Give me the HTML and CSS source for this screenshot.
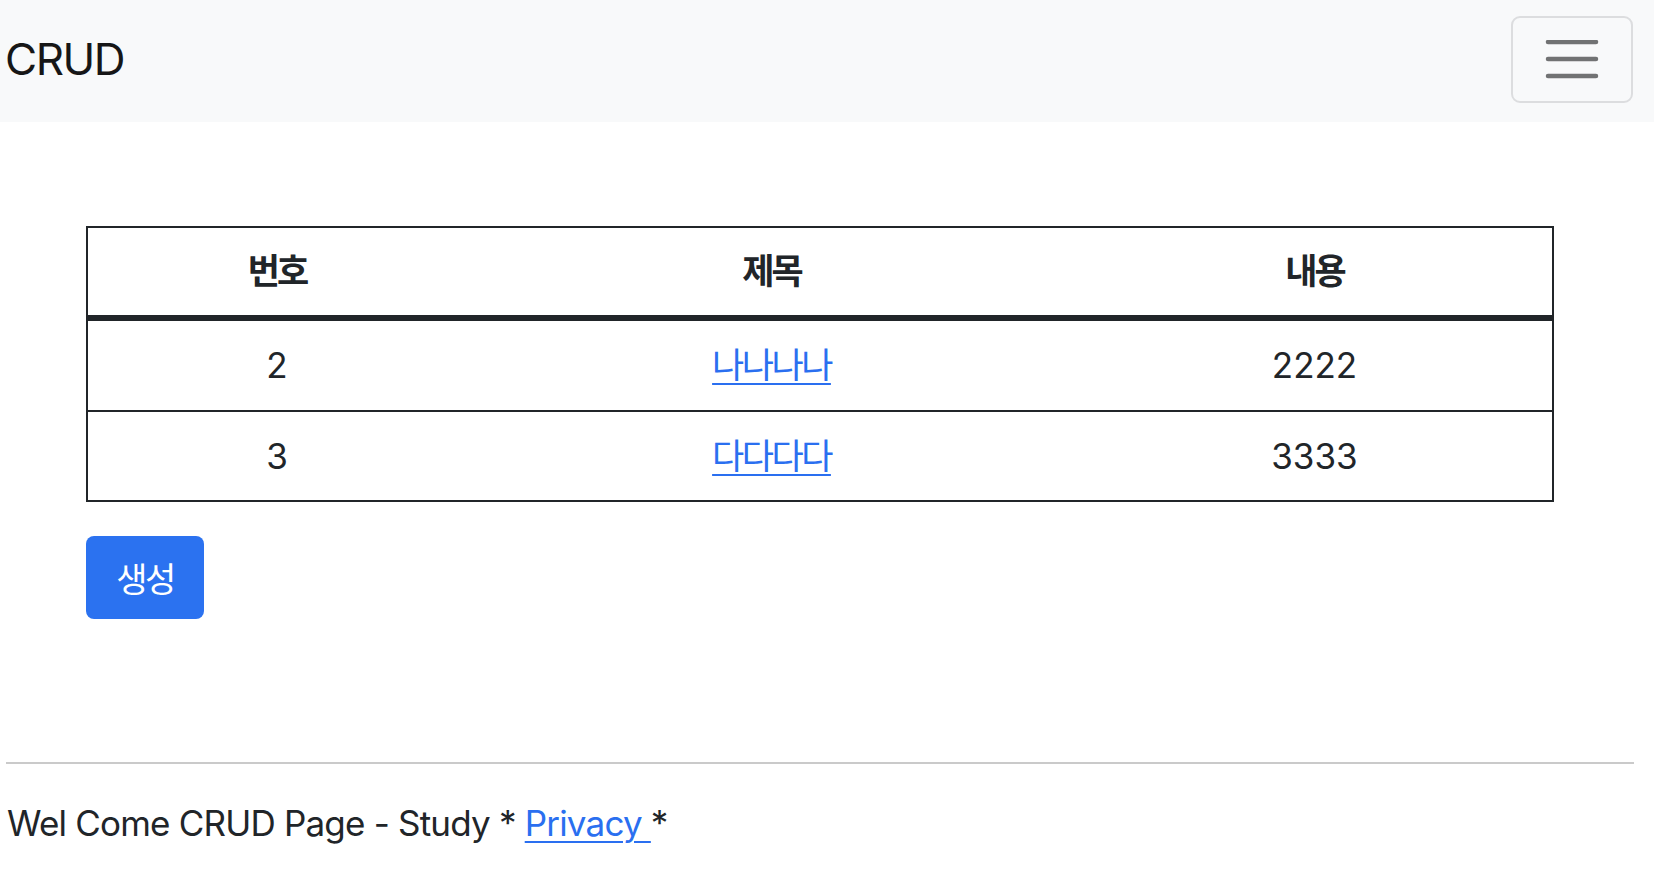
FILE: index.html
```html
<!DOCTYPE html>
<html lang="ko">
<head>
<meta charset="utf-8">
<title>CRUD</title>
<link rel="stylesheet" href="styles.css">
</head>
<body>
<header class="navbar">
  <a class="brand" href="#">CRUD</a>
  <button class="toggler" type="button" aria-label="Toggle navigation">
    <svg class="toggler-icon" width="54" height="40" viewBox="0 0 54 40">
      <path d="M3 5H51M3 22H51M3 39H51" stroke="#717273" stroke-width="4.5" stroke-linecap="round" fill="none" transform="translate(0,-3)"/>
    </svg>
  </button>
</header>

<main class="page">
  <table class="board">
    <colgroup>
      <col class="col-num">
      <col class="col-title">
      <col class="col-body">
    </colgroup>
    <thead>
      <tr><th>번호</th><th>제목</th><th>내용</th></tr>
    </thead>
    <tbody>
      <tr><td>2</td><td><a class="link ko" href="#">나나나나</a></td><td>2222</td></tr>
      <tr><td>3</td><td><a class="link ko" href="#">다다다다</a></td><td>3333</td></tr>
    </tbody>
  </table>
  <button class="btn-create" type="button">생성</button>
</main>

<footer class="footer">
  <hr class="rule">
  <p class="footer-text">Wel Come CRUD Page - Study * <a class="link" href="#">Privacy </a>*</p>
</footer>
</body>
</html>
```

FILE: styles.css
```css
* { box-sizing: border-box; }

body {
  margin: 0;
  background: #ffffff;
  color: #212529;
  font-family: Inter, "Noto Sans CJK KR", sans-serif;
  font-size: 35px;
  line-height: 1.5;
}

.navbar {
  height: 122px;
  background: #f8f9fa;
  display: flex;
  align-items: center;
  justify-content: space-between;
  padding: 0 21px 0 5px;
}

.brand {
  font-size: 44px;
  color: #161616;
  text-decoration: none;
  letter-spacing: -1.5px;
  margin-top: -4px;
}

.toggler {
  width: 122px;
  height: 87px;
  margin-top: -3px;
  border: 2px solid #dcdddf;
  border-radius: 9px;
  background: transparent;
  display: flex;
  align-items: center;
  justify-content: center;
  padding: 0;
}

.toggler-icon { display: block; }

.page {
  margin: 0 20px 0 6px;
  padding: 104px 80px 0;
}

.board {
  width: 100%;
  border-collapse: collapse;
  border: 2px solid #212529;
  table-layout: fixed;
  margin-bottom: 34px;
}

.col-num { width: 379px; }
.col-title { width: 611px; }

.board th,
.board td {
  text-align: center;
  vertical-align: middle;
  padding: 18px 0 17.5px;
  line-height: 53px;
  font-weight: 400;
}

.board th {
  padding: 17px 0;
  font-weight: 700;
  letter-spacing: -3px;
  border-bottom: 6px solid #212529;
}

.board tbody tr + tr td {
  border-top: 2px solid #212529;
}

.link {
  color: #2a6ff0;
  text-decoration: underline;
  text-decoration-thickness: 2px;
  text-underline-offset: 5px;
}

.ko { letter-spacing: -2.5px; }

.btn-create {
  display: block;
  width: 118px;
  height: 83px;
  background: #2b72f0;
  color: #ffffff;
  border: none;
  border-radius: 8px;
  font-family: inherit;
  font-size: 34px;
  letter-spacing: -2.5px;
  padding: 0;
}

.footer {
  margin: 143px 20px 0 6px;
}

.rule {
  margin: 0 0 33px;
  border: 0;
  border-top: 2px solid #cacaca;
}

.footer-text {
  margin: 0;
  padding-left: 1px;
  letter-spacing: -0.8px;
}
```
